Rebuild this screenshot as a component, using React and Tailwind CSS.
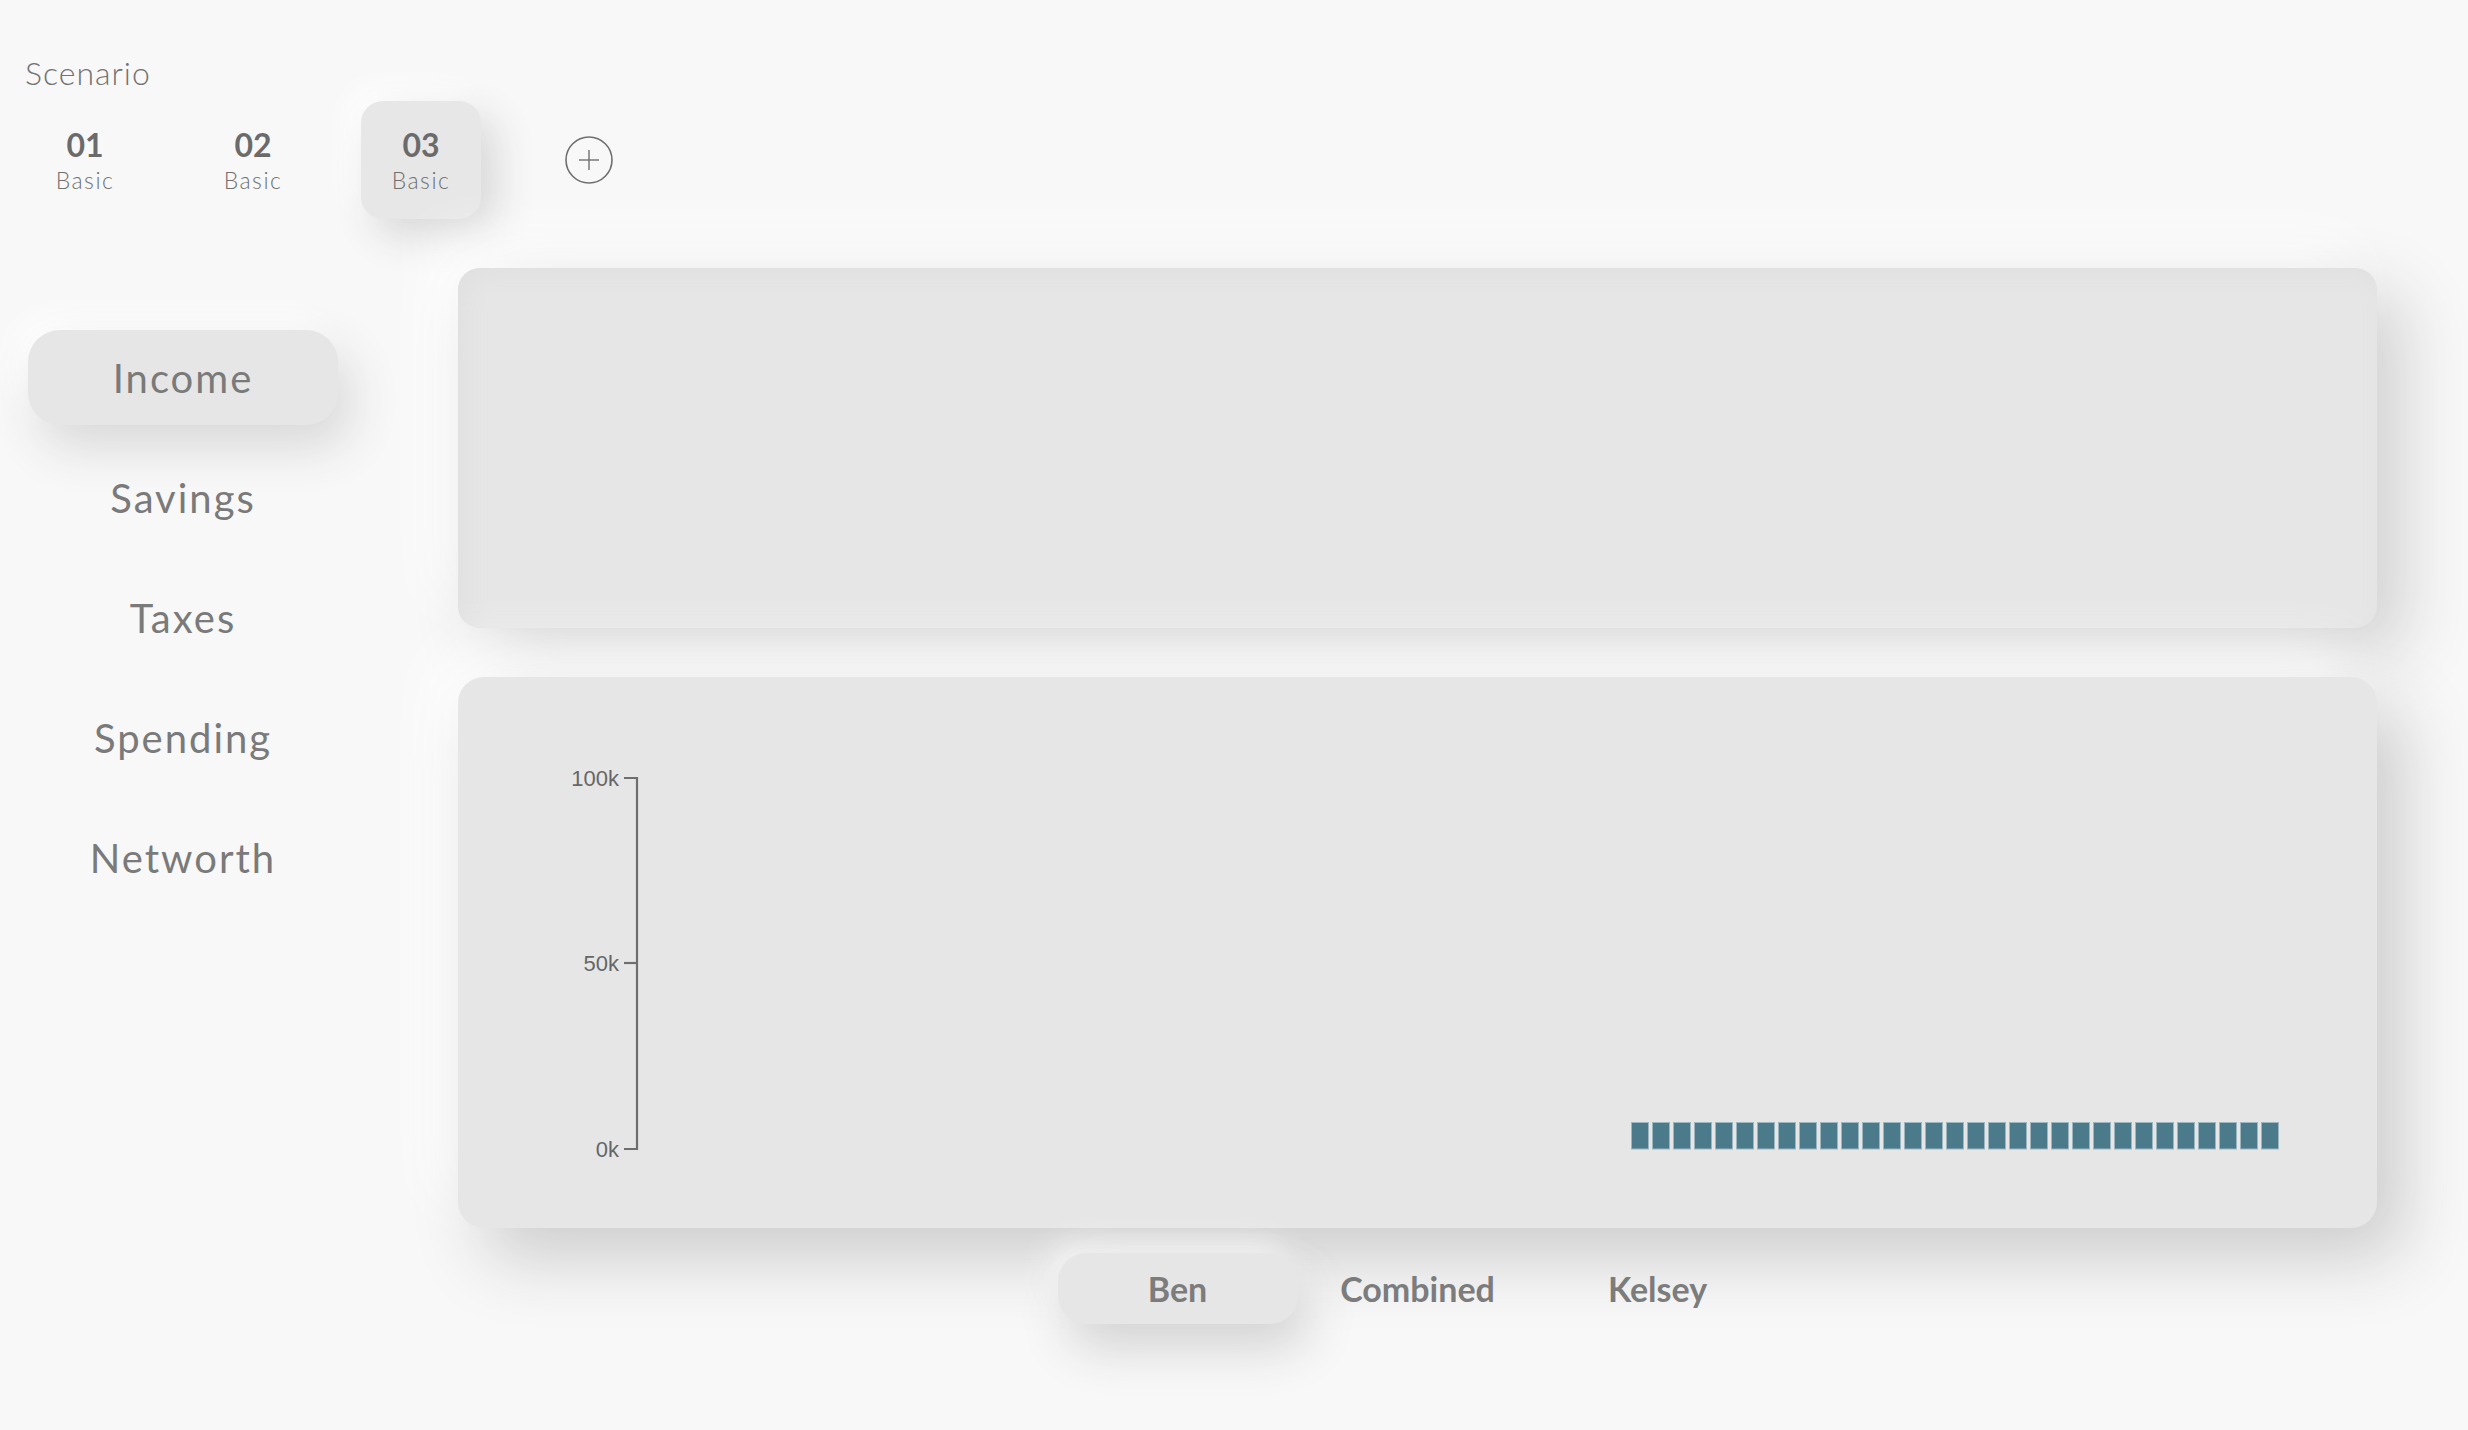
import React from "react";

const tabs = [
  { n: "01", active: false },
  { n: "02", active: false },
  { n: "03", active: true },
];

const nav = ["Income", "Savings", "Taxes", "Spending", "Networth"];

function PlusIcon() {
  return (
    <svg width="50" height="50" viewBox="0 0 50 50">
      <circle cx="25" cy="25" r="23" fill="none" stroke="#6f6f6f" strokeWidth="1.6" />
      <line x1="25" y1="15" x2="25" y2="35" stroke="#6f6f6f" strokeWidth="1.4" />
      <line x1="15" y1="25" x2="35" y2="25" stroke="#6f6f6f" strokeWidth="1.4" />
    </svg>
  );
}

function Chart() {
  const bars = Array.from({ length: 31 }, (_, i) => i);
  const axisX = 179;
  const top = 101;
  const mid = 286;
  const bottom = 472;
  return (
    <svg width="1919" height="551" viewBox="0 0 1919 551" className="block">
      <g fontFamily="'Liberation Sans', Arial, sans-serif" fontSize="22" fill="#666666" textAnchor="end">
        <text x="161" y={top + 8}>100k</text>
        <text x="161" y={mid + 8}>50k</text>
        <text x="161" y={bottom + 8}>0k</text>
      </g>
      <g stroke="#6e6e6e" strokeWidth="2.2" fill="none">
        <path d={`M166 ${top} H${axisX} V${bottom} H166`} />
        <path d={`M166 ${mid} H${axisX}`} />
      </g>
      <g>
        {bars.map((i) => (
          <rect
            key={i}
            x={1173.5 + i * 21}
            y={445.5}
            width={17}
            height={26.5}
            fill="#4b7a8b"
            stroke="#9db5bf"
            strokeWidth="1"
          />
        ))}
      </g>
    </svg>
  );
}

export default function App() {
  return (
    <div className="w-[2468px] h-[1430px] overflow-hidden bg-[#f8f8f8] font-['Lato',sans-serif] text-[#787878]">
      <div className="pl-[25px] pt-[57px]">
        <div className="text-[32px] font-light leading-none tracking-[1px] text-[#727272]">Scenario</div>
        <div className="mt-[12px] flex items-center gap-[48px]">
          {tabs.map((t) => (
            <div
              key={t.n}
              className={
                t.active
                  ? "w-[120px] h-[118px] rounded-[22px] bg-[#e7e7e7] flex flex-col items-center justify-center shadow-[14px_16px_40px_#d6d6d6,-12px_-12px_30px_#ffffff]"
                  : "w-[120px] h-[118px] rounded-[22px] flex flex-col items-center justify-center"
              }
            >
              <div className="text-[32px] font-bold leading-none text-[#6b6b6b]">{t.n}</div>
              <div className="mt-[8px] text-[23px] font-light leading-none tracking-[1.5px] text-[#707070]">Basic</div>
            </div>
          ))}
          <div className="ml-[35px] flex items-center">
            <PlusIcon />
          </div>
        </div>
      </div>

      <div className="mt-[49px] flex items-start">
        <nav className="ml-[28px] mt-[62px] w-[310px] flex flex-col gap-[25px]">
          {nav.map((item, i) => (
            <div
              key={item}
              className={
                i === 0
                  ? "h-[95px] rounded-[32px] bg-[#e6e6e6] flex items-center justify-center text-[40px] tracking-[2px] text-[#7a7a7a] shadow-[12px_22px_50px_#d8d8d8,-12px_-12px_30px_#ffffff]"
                  : "h-[95px] rounded-[32px] flex items-center justify-center text-[40px] tracking-[2px] text-[#7a7a7a]"
              }
            >
              {item}
            </div>
          ))}
        </nav>

        <main className="ml-[120px] w-[1919px] flex flex-col">
          <div className="h-[360px] rounded-[22px] bg-[#e6e6e6] shadow-[26px_26px_70px_#d0d0d0,-24px_-24px_60px_#ffffff,inset_8px_8px_24px_#e0e0e0]" />
          <div className="mt-[49px] h-[551px] rounded-[26px] bg-[#e6e6e6] shadow-[26px_30px_70px_#cccccc,-24px_-24px_60px_#ffffff]">
            <Chart />
          </div>
          <div className="mt-[25px] flex justify-center">
            {["Ben", "Combined", "Kelsey"].map((p, i) => (
              <div
                key={p}
                className={
                  i === 0
                    ? "w-[240px] h-[71px] rounded-[28px] bg-[#e6e6e6] flex items-center justify-center text-[34px] font-bold text-[#7c7c7c] shadow-[10px_24px_50px_#d3d3d3,-10px_-10px_30px_#f6f6f6]"
                    : "w-[240px] h-[71px] rounded-[28px] flex items-center justify-center text-[34px] font-bold text-[#7c7c7c]"
                }
              >
                {p}
              </div>
            ))}
          </div>
        </main>
      </div>
    </div>
  );
}
